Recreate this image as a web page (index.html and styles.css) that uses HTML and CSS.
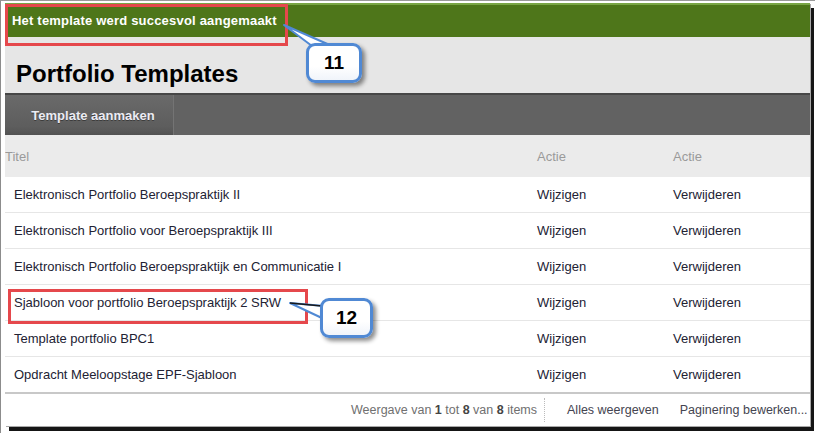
FILE: index.html
```html
<!DOCTYPE html>
<html lang="nl">

<head>
    <meta charset="UTF-8">
    <meta name="viewport" content="width=device-width, initial-scale=1.0">
    <title>Portfolio Templates</title>
    <link rel="stylesheet" href="styles.css">
</head>

<body>
    <div class="frame">
        <div class="page">
            <div class="notice">Het template werd succesvol aangemaakt</div>

            <div class="title-bar">
                <h1>Portfolio Templates</h1>
            </div>

            <div class="toolbar">
                <button type="button" class="tool-btn">Template aanmaken</button>
            </div>

            <div class="grid">
                <div class="grid-row grid-head">
                    <div class="cell cell-title">Titel</div>
                    <div class="cell">Actie</div>
                    <div class="cell">Actie</div>
                </div>
                <div class="grid-row">
                    <div class="cell cell-title">Elektronisch Portfolio Beroepspraktijk II</div>
                    <div class="cell">Wijzigen</div>
                    <div class="cell">Verwijderen</div>
                </div>
                <div class="grid-row">
                    <div class="cell cell-title">Elektronisch Portfolio voor Beroepspraktijk III</div>
                    <div class="cell">Wijzigen</div>
                    <div class="cell">Verwijderen</div>
                </div>
                <div class="grid-row">
                    <div class="cell cell-title">Elektronisch Portfolio Beroepspraktijk en Communicatie I</div>
                    <div class="cell">Wijzigen</div>
                    <div class="cell">Verwijderen</div>
                </div>
                <div class="grid-row">
                    <div class="cell cell-title">Sjabloon voor portfolio Beroepspraktijk 2 SRW</div>
                    <div class="cell">Wijzigen</div>
                    <div class="cell">Verwijderen</div>
                </div>
                <div class="grid-row">
                    <div class="cell cell-title">Template portfolio BPC1</div>
                    <div class="cell">Wijzigen</div>
                    <div class="cell">Verwijderen</div>
                </div>
                <div class="grid-row last">
                    <div class="cell cell-title">Opdracht Meeloopstage EPF-Sjabloon</div>
                    <div class="cell">Wijzigen</div>
                    <div class="cell">Verwijderen</div>
                </div>
            </div>

            <div class="pager">
                <span class="pager-count">Weergave van <b>1</b> tot <b>8</b> van <b>8</b> items</span>
                <span class="pager-sep"></span>
                <span class="pager-link">Alles weergeven</span>
                <span class="pager-link">Paginering bewerken...</span>
            </div>
        </div>

        <!-- annotations -->
        <div class="mark mark-11"></div>
        <div class="mark mark-12"></div>

        <svg class="tails" width="815" height="433" viewBox="0 0 815 433">
            <polygon points="283,24 311,45 331,45" fill="#ffffff" stroke="#5089d4" stroke-width="2" stroke-linejoin="round" />
            <polygon points="289,302 323,305 323,318" fill="#ffffff" stroke="#5089d4" stroke-width="2" stroke-linejoin="round" />
            <line x1="289" y1="302" x2="321" y2="305" stroke="#1a1a1a" stroke-width="1.5" />
        </svg>

        <div class="bubble bubble-11">11</div>
        <div class="bubble bubble-12">12</div>
    </div>
</body>

</html>
```

FILE: styles.css
```css
body {
    margin: 0;
    background: #ffffff;
    font-family: "Liberation Sans", Arial, sans-serif;
    font-size: 13px;
}

.frame {
    position: relative;
    width: 815px;
    height: 433px;
    box-sizing: border-box;
    border-left: 1px solid #8c8c8c;
    border-top: 1px solid #9a9a9a;
    padding: 2px 0 0 4px;
    overflow: hidden;
}

.page {
    width: 805px;
    height: 423px;
    overflow: hidden;
    background: #ffffff;
    box-shadow: 1px 1px 0 #a8a8a8, 4px 5px 0 #151515;
}

/* green status message */
.notice {
    height: 32px;
    border-top: 2px solid #79a545;
    background: #4e761a;
    color: #ffffff;
    font-weight: bold;
    font-size: 13px;
    letter-spacing: 0.2px;
    line-height: 32px;
    padding-left: 7px;
    white-space: nowrap;
}

.title-bar {
    height: 56px;
    box-sizing: border-box;
    background: #e6e6e6;
    display: flex;
    align-items: flex-end;
    padding: 0 0 5px 11px;
}

.title-bar h1 {
    margin: 0;
    font-size: 24px;
    line-height: 28px;
    color: #000000;
}

.toolbar {
    height: 40px;
    border-top: 2px solid #474747;
    background: #626262;
    display: flex;
}

.tool-btn {
    width: 169px;
    height: 40px;
    border: none;
    border-right: 1px solid #747474;
    background: linear-gradient(to bottom, #6a6a6a 0%, #5d5d5d 80%, #525252 100%);
    color: #ececf4;
    font-family: inherit;
    font-weight: bold;
    font-size: 13px;
    padding: 0 0 0 8px;
    text-shadow: 0 1px 0 #3c3c3c;
    cursor: pointer;
}

/* list */
.grid-row {
    display: grid;
    grid-template-columns: 532px 136px 137px;
    height: 35px;
    border-bottom: 1px solid #e6e6e6;
    align-items: center;
    color: #222233;
}

.grid-head {
    height: 42px;
    border-bottom: none;
    background: #ebebeb;
    color: #9a9a9a;
}

.grid-row.last {
    border-bottom: 2px solid #c8c8c8;
}

.cell {
    white-space: nowrap;
}

.cell-title {
    padding-left: 9px;
}

.grid-head .cell-title {
    padding-left: 0;
}

.pager {
    height: 32px;
    display: flex;
    align-items: center;
    padding-left: 346px;
    white-space: nowrap;
    font-size: 12.5px;
    color: #707070;
}

.pager-count b {
    color: #444444;
}

.pager-sep {
    width: 0;
    height: 24px;
    border-left: 1px dotted #bbbbbb;
    margin: 0 22px 0 7px;
}

.pager-link {
    color: #444450;
    margin-right: 21px;
}

.pager-link:last-child {
    margin-right: 0;
}

/* annotations */
.mark {
    position: absolute;
    border: 3px solid #e5484c;
    box-sizing: border-box;
}

.mark-11 {
    left: 4px;
    top: 3px;
    width: 283px;
    height: 42px;
}

.mark-12 {
    left: 7px;
    top: 288px;
    width: 300px;
    height: 35px;
}

.tails {
    position: absolute;
    left: 0;
    top: 0;
}

.bubble {
    position: absolute;
    box-sizing: border-box;
    width: 56px;
    height: 40px;
    border: 3px solid #5089d4;
    border-radius: 9px;
    background: linear-gradient(to bottom, #ffffff 60%, #f0f4fa 100%);
    box-shadow: 3px 3px 4px rgba(0, 0, 0, 0.45);
    font-weight: bold;
    font-size: 19px;
    color: #000000;
    display: flex;
    align-items: center;
    justify-content: center;
}

.bubble-11 {
    left: 305px;
    top: 42px;
}

.bubble-12 {
    left: 319px;
    top: 297px;
    width: 53px;
}
```
